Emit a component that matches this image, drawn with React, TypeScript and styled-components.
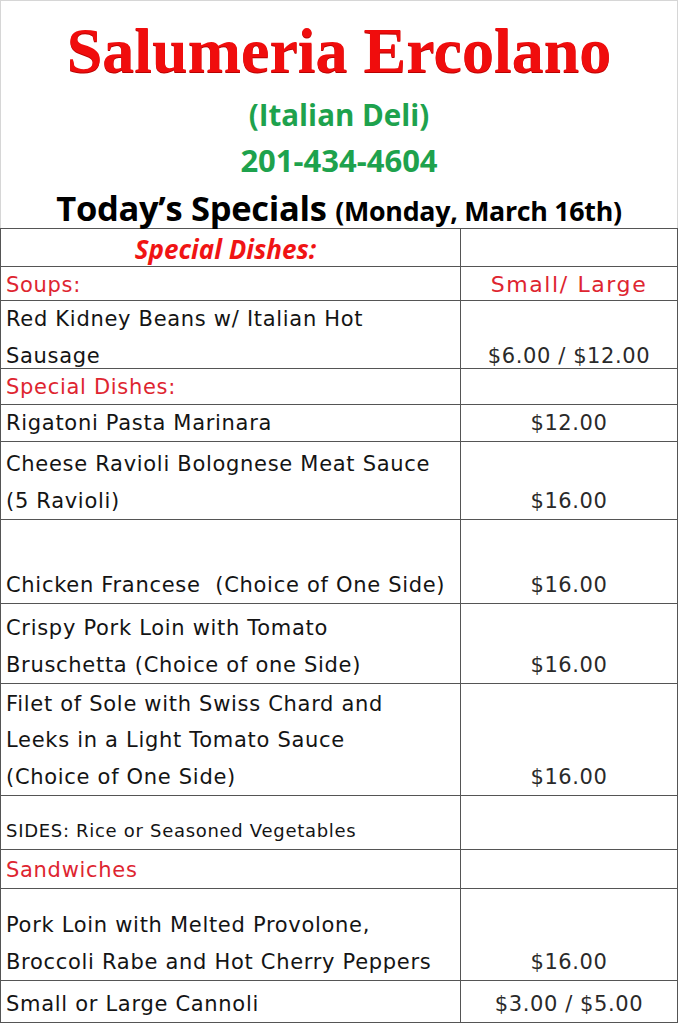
import React, { FC } from 'react';
import styled, { createGlobalStyle } from 'styled-components';

const GlobalStyle = createGlobalStyle`
    html, body {
        margin: 0;
        padding: 0;
        background: #ffffff;
    }
    * {
        box-sizing: border-box;
    }
`;

const hand = `'DejaVu Sans', 'Liberation Sans', sans-serif`;
const calibri = `'Open Sans', 'Lato', sans-serif`;

const Page = styled.div`
    width: 678px;
    height: 1024px;
    overflow: hidden;
    background: #ffffff;
`;

const Header = styled.header`
    height: 228px;
    border: 1px solid #d6d6d6;
    border-bottom: none;
    display: flex;
    flex-direction: column;
    align-items: center;
    padding-top: 18px;
`;

const Title = styled.h1`
    margin: 0;
    font-family: 'Liberation Serif', 'DejaVu Serif', serif;
    font-weight: 700;
    font-size: 64px;
    line-height: 64px;
    color: #f00d0d;
    text-shadow: 0 1px 0 #b80000;
`;

const SubLine = styled.div<{ $size: number; $top: number }>`
    margin-top: ${(p) => p.$top}px;
    font-family: ${calibri};
    font-weight: 700;
    font-size: ${(p) => p.$size}px;
    line-height: 40px;
    color: #1ea24d;
`;

const Today = styled.div`
    margin-top: 8px;
    font-family: ${calibri};
    font-weight: 700;
    font-size: 34.5px;
    line-height: 40px;
    letter-spacing: -0.3px;
    color: #000000;
    & span {
        font-size: 26.8px;
    }
`;

const Table = styled.section`
    border-top: 1px solid #555555;
    border-left: 1px solid #555555;
    border-right: 1px solid #555555;
`;

const Row = styled.div<{ $height: number }>`
    display: grid;
    grid-template-columns: 460px 1fr;
    height: ${(p) => p.$height}px;
    border-bottom: 1px solid #555555;
`;

const NameCell = styled.div<{ $red?: boolean; $small?: boolean }>`
    display: flex;
    flex-direction: column;
    justify-content: flex-end;
    border-right: 1px solid #555555;
    padding: 0 0 0 5px;
    font-family: ${hand};
    font-size: ${(p) => (p.$small ? 18 : 21)}px;
    letter-spacing: 0.7px;
    line-height: 36.5px;
    color: ${(p) => (p.$red ? '#de2530' : '#141414')};
    white-space: pre;
`;

const PriceCell = styled.div<{ $red?: boolean }>`
    display: flex;
    align-items: flex-end;
    justify-content: center;
    font-family: ${hand};
    font-size: ${(p) => (p.$red ? 22 : 21)}px;
    letter-spacing: ${(p) => (p.$red ? 1.6 : 0.6)}px;
    line-height: 36.5px;
    color: ${(p) => (p.$red ? '#de2530' : '#2a2a2a')};
    white-space: nowrap;
`;

const HeadCell = styled.div`
    display: flex;
    align-items: center;
    justify-content: center;
    border-right: 1px solid #555555;
    padding: 2px 10px 0 0;
    font-family: ${calibri};
    font-weight: 700;
    font-style: italic;
    font-size: 26px;
    color: #f01414;
`;

interface IMenuRow {
    lines: string[];
    price?: string;
    height: number;
    red?: boolean;
    small?: boolean;
}

const rows: IMenuRow[] = [
    { lines: ['Soups:'], price: 'Small/ Large', height: 34, red: true },
    { lines: ['Red Kidney Beans w/ Italian Hot', 'Sausage'], price: '$6.00 / $12.00', height: 68 },
    { lines: ['Special Dishes:'], height: 36, red: true },
    { lines: ['Rigatoni Pasta Marinara'], price: '$12.00', height: 37 },
    { lines: ['Cheese Ravioli Bolognese Meat Sauce', '(5 Ravioli)'], price: '$16.00', height: 78 },
    { lines: ['Chicken Francese  (Choice of One Side)'], price: '$16.00', height: 84 },
    { lines: ['Crispy Pork Loin with Tomato', 'Bruschetta (Choice of one Side)'], price: '$16.00', height: 80 },
    {
        lines: ['Filet of Sole with Swiss Chard and', 'Leeks in a Light Tomato Sauce', '(Choice of One Side)'],
        price: '$16.00',
        height: 112,
    },
    { lines: ['SIDES: Rice or Seasoned Vegetables'], height: 54, small: true },
    { lines: ['Sandwiches'], height: 39, red: true },
    {
        lines: ['Pork Loin with Melted Provolone,', 'Broccoli Rabe and Hot Cherry Peppers'],
        price: '$16.00',
        height: 92,
    },
    { lines: ['Small or Large Cannoli'], price: '$3.00 / $5.00', height: 42 },
];

const MenuRow: FC<IMenuRow> = ({ lines, price, height, red, small }) => (
    <Row $height={height}>
        <NameCell $red={red} $small={small}>
            {lines.map((l) => (
                <div key={l}>{l}</div>
            ))}
        </NameCell>
        <PriceCell $red={red && !!price}>{price}</PriceCell>
    </Row>
);

const App: FC = () => {
    return (
        <Page>
            <GlobalStyle />
            <Header>
                <Title>Salumeria Ercolano</Title>
                <SubLine $size={29.5} $top={12}>
                    (Italian Deli)
                </SubLine>
                <SubLine $size={31} $top={5}>
                    201-434-4604
                </SubLine>
                <Today>
                    Today’s Specials <span>(Monday, March 16th)</span>
                </Today>
            </Header>
            <Table>
                <Row $height={38}>
                    <HeadCell>Special Dishes:</HeadCell>
                    <div />
                </Row>
                {rows.map((r, i) => (
                    <MenuRow key={i} {...r} />
                ))}
            </Table>
        </Page>
    );
};

export default App;
